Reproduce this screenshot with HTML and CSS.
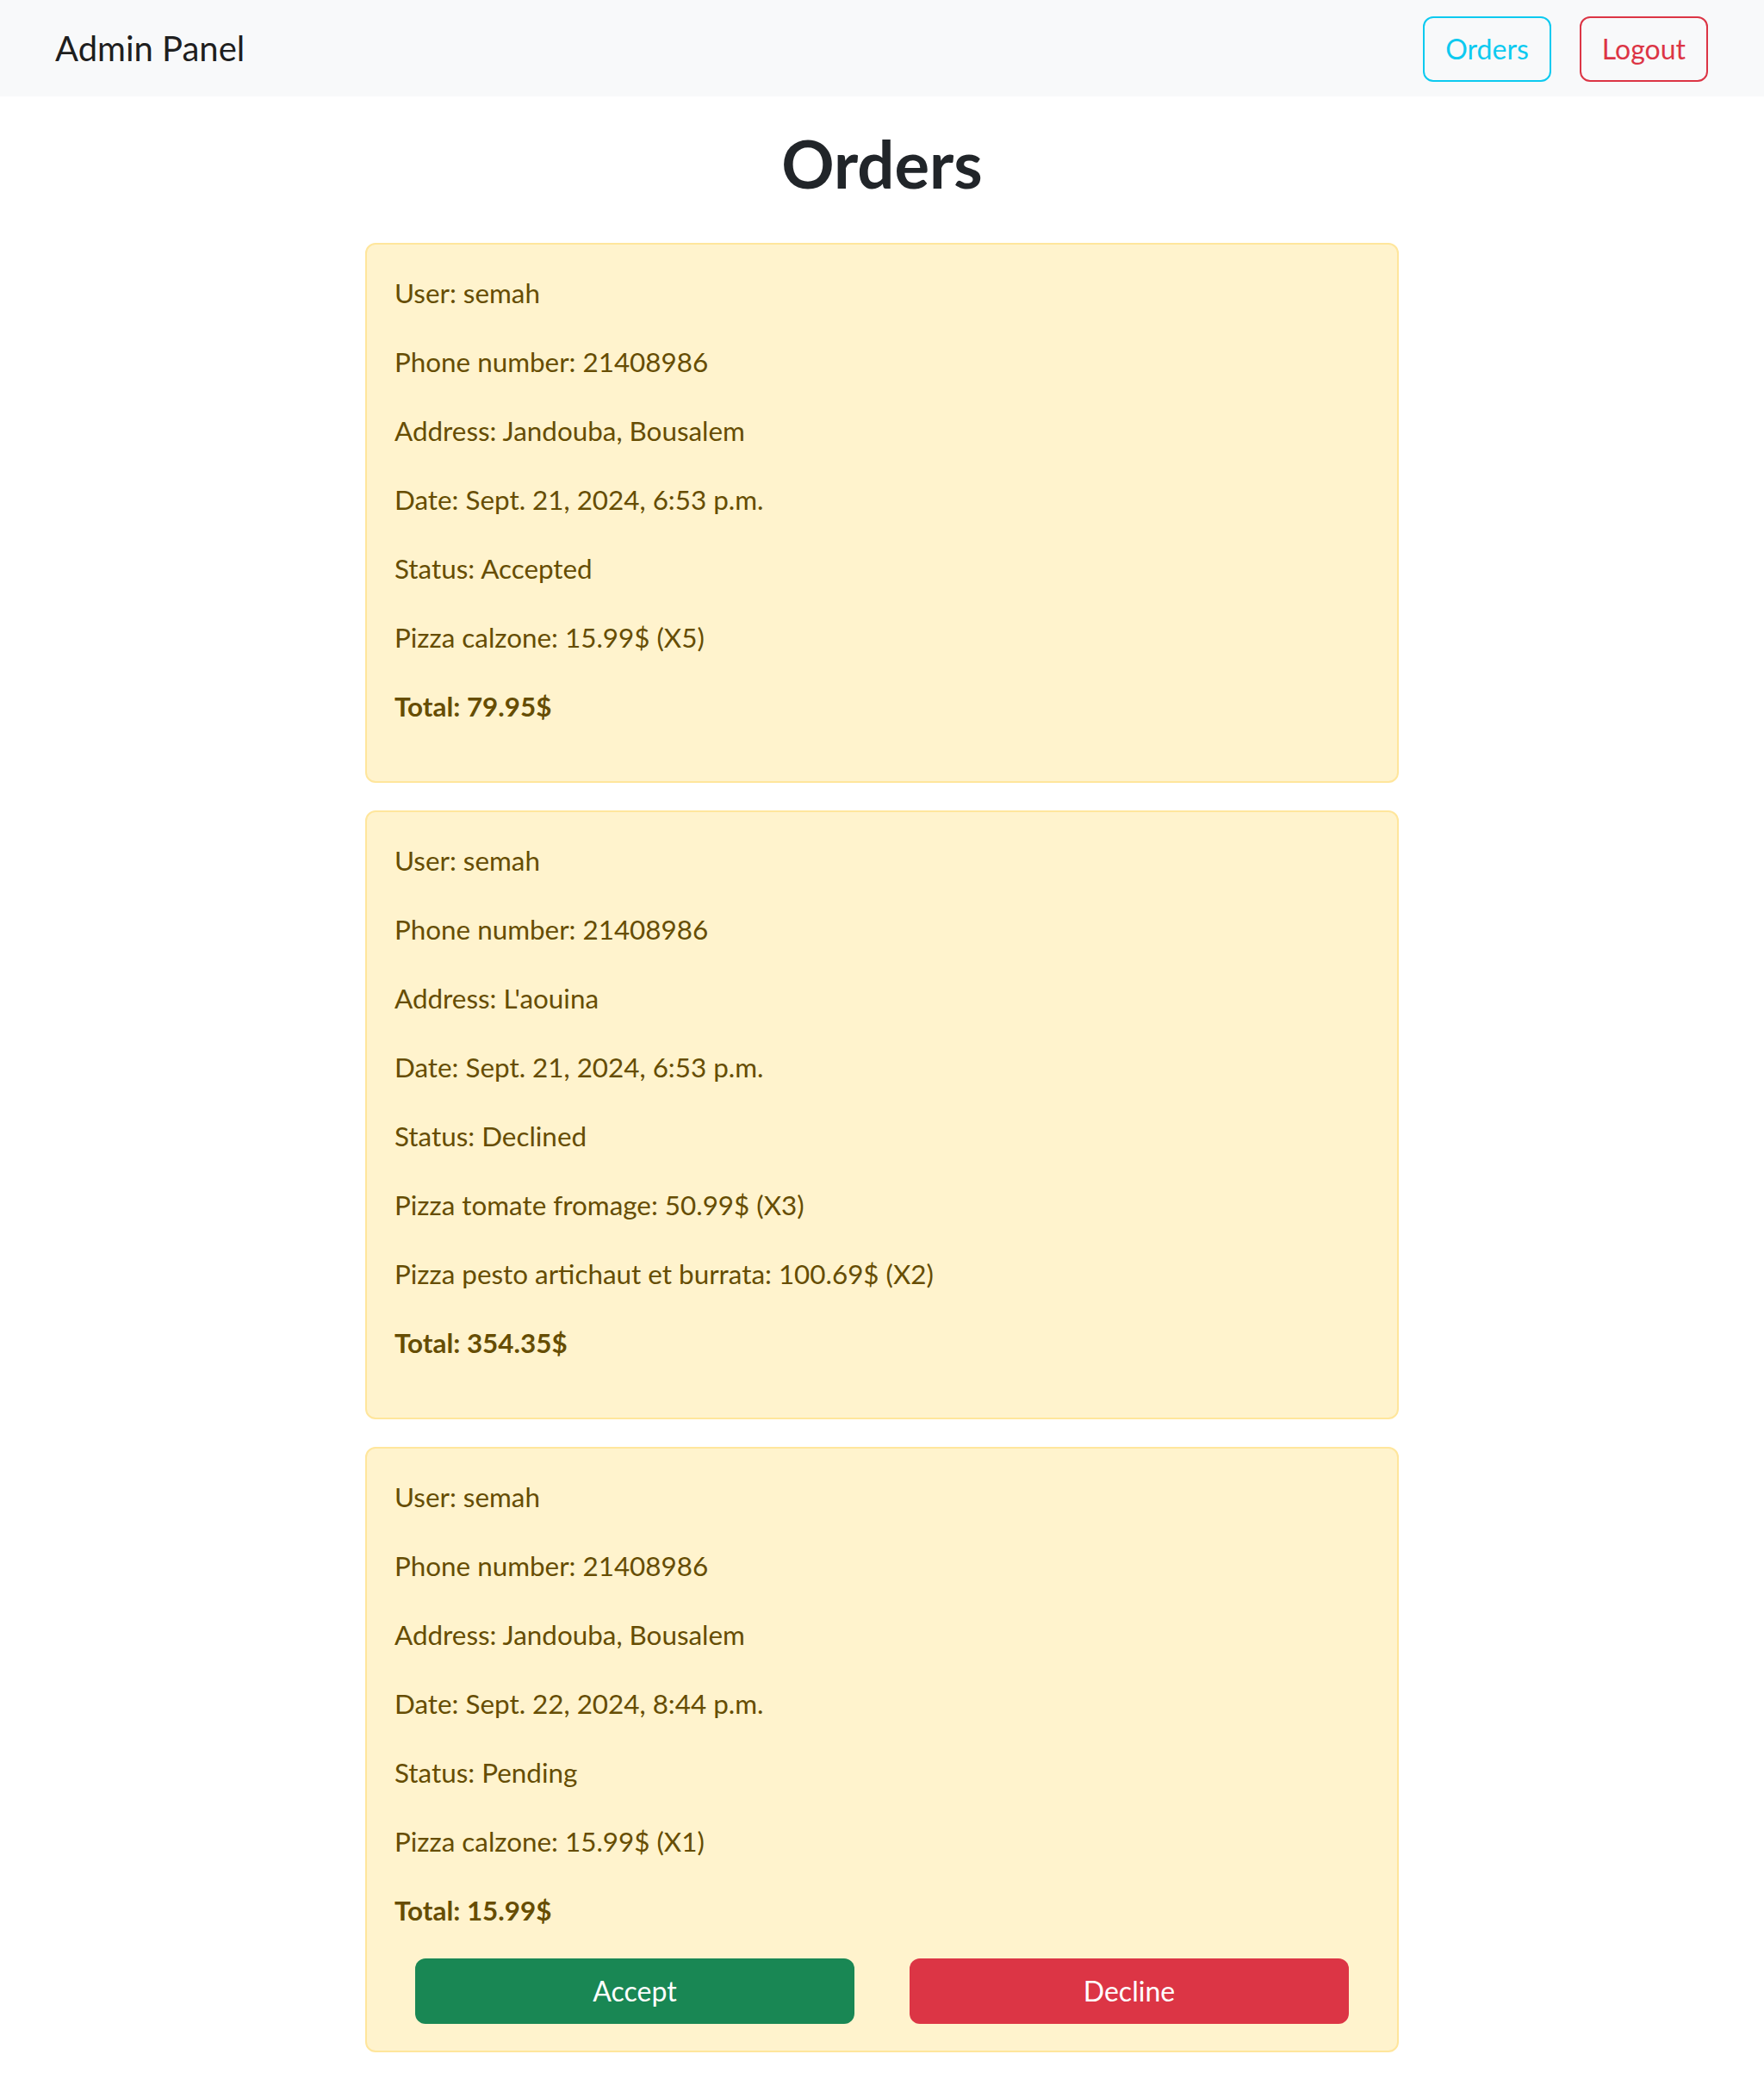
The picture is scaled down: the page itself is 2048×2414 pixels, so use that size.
FILE: index.html
```html
<!DOCTYPE html>
<html lang="en">
<head>
<meta charset="utf-8">
<title>Admin Panel - Orders</title>
<link rel="stylesheet" href="styles.css">
</head>
<body>
<nav class="navbar">
  <a class="brand" href="#">Admin Panel</a>
  <div class="nav-actions">
    <a class="btn btn-outline-info" href="#">Orders</a>
    <a class="btn btn-outline-danger" href="#">Logout</a>
  </div>
</nav>
<main class="container">
  <h1 class="title">Orders</h1>

  <article class="order-card">
    <p class="line">User: semah</p>
    <p class="line">Phone number: 21408986</p>
    <p class="line">Address: Jandouba, Bousalem</p>
    <p class="line">Date: Sept. 21, 2024, 6:53 p.m.</p>
    <p class="line">Status: Accepted</p>
    <p class="line">Pizza calzone: 15.99$ (X5)</p>
    <p class="line total">Total: 79.95$</p>
  </article>

  <article class="order-card">
    <p class="line">User: semah</p>
    <p class="line">Phone number: 21408986</p>
    <p class="line">Address: L'aouina</p>
    <p class="line">Date: Sept. 21, 2024, 6:53 p.m.</p>
    <p class="line">Status: Declined</p>
    <p class="line">Pizza tomate fromage: 50.99$ (X3)</p>
    <p class="line">Pizza pesto artichaut et burrata: 100.69$ (X2)</p>
    <p class="line total">Total: 354.35$</p>
  </article>

  <article class="order-card">
    <p class="line">User: semah</p>
    <p class="line">Phone number: 21408986</p>
    <p class="line">Address: Jandouba, Bousalem</p>
    <p class="line">Date: Sept. 22, 2024, 8:44 p.m.</p>
    <p class="line">Status: Pending</p>
    <p class="line">Pizza calzone: 15.99$ (X1)</p>
    <p class="line total">Total: 15.99$</p>
    <div class="actions">
      <button class="action-btn accept" type="button">Accept</button>
      <button class="action-btn decline" type="button">Decline</button>
    </div>
  </article>
</main>
</body>
</html>
```
FILE: styles.css
```css
* {
  box-sizing: border-box;
}

body {
  margin: 0;
  font-family: Lato, "Open Sans", "Noto Sans", sans-serif;
  font-size: 31.4px;
  line-height: 48px;
  color: #212529;
  background: #ffffff;
}

.navbar {
  display: flex;
  align-items: center;
  justify-content: space-between;
  height: 112px;
  padding: 18px 65px 16px 64px;
  background: #f8f9fa;
}

.brand {
  font-size: 40px;
  line-height: 60px;
  padding: 8px 0 10px;
  color: rgba(0, 0, 0, 0.9);
  text-decoration: none;
}

.nav-actions {
  display: flex;
  gap: 33px;
}

.btn {
  display: inline-block;
  height: 76px;
  padding: 12px 24px;
  font-size: 32px;
  line-height: 48px;
  border: 2px solid;
  border-radius: 12px;
  text-decoration: none;
}

.btn-outline-info {
  color: #0dcaf0;
  border-color: #0dcaf0;
}

.btn-outline-danger {
  color: #dc3545;
  border-color: #dc3545;
}

.container {
  width: 1200px;
  margin: 0 auto;
  padding-bottom: 30px;
}

.title {
  margin: 30px 0 44px;
  font-size: 76px;
  line-height: 96px;
  font-weight: 700;
  text-align: center;
  color: #212529;
}

.order-card {
  margin-bottom: 32px;
  padding: 32px 32px 31px;
  background: #fff3cd;
  border: 2px solid #ffe69c;
  border-radius: 12px;
  color: #664d03;
}

.line {
  margin: 0 0 32px;
}

.total {
  font-weight: 700;
}

.actions {
  display: flex;
  gap: 64px;
  padding: 0 24px;
}

.action-btn {
  flex: 1;
  height: 76px;
  padding: 12px 24px;
  font-family: inherit;
  font-size: 32px;
  line-height: 48px;
  color: #ffffff;
  border: 0;
  border-radius: 12px;
}

.accept {
  background: #198754;
}

.decline {
  background: #dc3545;
}
```
